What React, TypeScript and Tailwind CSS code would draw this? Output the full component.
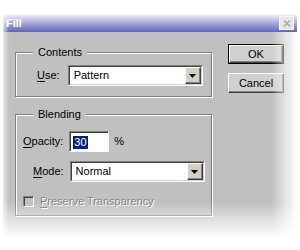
import type { ReactNode } from "react"

const font = { fontFamily: '"Liberation Sans", Arial, sans-serif' }

function Underlined({ first, rest }: { first: string; rest: string }) {
  return (
    <span>
      <span className="underline underline-offset-2">{first}</span>
      {rest}
    </span>
  )
}

function DropArrow() {
  return (
    <div className="h-full w-[16px] bg-[#d4d0c8] border-t border-l border-t-white border-l-white border-r border-b border-r-[#404040] border-b-[#404040] shadow-[inset_-1px_-1px_0_#808080] flex items-center justify-center">
      <svg width="7" height="4" viewBox="0 0 7 4">
        <path d="M0 0H7L3.5 4Z" fill="#000" />
      </svg>
    </div>
  )
}

function Select({ value }: { value: string }) {
  return (
    <div className="h-[21px] w-[135px] bg-white border-t border-l border-t-[#808080] border-l-[#808080] border-r border-b border-r-white border-b-white">
      <div className="h-full w-full border-t border-l border-t-[#404040] border-l-[#404040] border-r border-b border-r-[#d4d0c8] border-b-[#d4d0c8] flex items-stretch">
        <div className="flex-1 flex items-center pl-[4px] text-[11px] text-black">{value}</div>
        <DropArrow />
      </div>
    </div>
  )
}

function Group({ title, children, className }: { title: string; children: ReactNode; className: string }) {
  return (
    <fieldset className={`border border-[#808080] shadow-[1px_1px_0_#fff,inset_1px_1px_0_#fff] ${className}`}>
      <legend className="ml-[17px] px-[5px] bg-[#c0c0c0] text-[11px] text-black leading-[13px]">{title}</legend>
      {children}
    </fieldset>
  )
}

function Button({ label, isDefault, className }: { label: string; isDefault?: boolean; className?: string }) {
  return (
    <div className={`h-[20px] w-[56px] ${isDefault ? "border border-black" : ""} ${className ?? ""}`}>
      <div className="h-full w-full bg-[#d0d0d0] border border-t-white border-l-white border-r-[#404040] border-b-[#404040] shadow-[inset_-1px_-1px_0_#808080] flex items-center justify-center text-[11px] text-black">
        {label}
      </div>
    </div>
  )
}

export default function App() {
  return (
    <div className="w-[300px] h-[250px] bg-white overflow-hidden pt-[14px] pl-[3px]" style={font}>
      <div className="relative w-[294px] h-[224px] bg-[#c0c0c0]">
        <div className="h-[18px] bg-gradient-to-b from-[#f6f6fc] via-[#a8a8dc] to-[#6464b4] flex items-center justify-between pl-[3px] pr-[3px]">
          <span className="text-[11px] font-bold text-white">Fill</span>
          <div className="w-[15px] h-[14px] bg-[#e8e8ec] border border-[#f6f6f6] flex items-center justify-center">
            <svg width="8" height="7" viewBox="0 0 8 7">
              <path d="M1 0.5L7 6.5M7 0.5L1 6.5" stroke="#a8a8a8" strokeWidth="1.5" />
            </svg>
          </div>
        </div>

        <div className="flex pl-[12px] pt-[14px]">
          <div className="flex flex-col w-[197px]">
            <Group title="Contents" className="h-[51px]">
              <div className="flex items-center mt-[6px] pl-[21px] gap-[8px]">
                <span className="text-[11px] text-black"><Underlined first="U" rest="se:" /></span>
                <Select value="Pattern" />
              </div>
            </Group>

            <Group title="Blending" className="h-[108px] mt-[11px]">
              <div className="flex flex-col mt-[10px] pl-[7px]">
                <div className="flex items-center gap-[6px]">
                  <span className="text-[11px] text-black"><Underlined first="O" rest="pacity:" /></span>
                  <div className="h-[21px] w-[40px] bg-white border-t border-l border-t-[#808080] border-l-[#808080] border-r border-b border-r-white border-b-white">
                    <div className="h-full w-full border-t border-l border-t-[#404040] border-l-[#404040] flex items-center pl-[2px]">
                      <span className="bg-[#0a246a] text-white text-[11px] leading-[13px] px-[1px]">30</span>
                    </div>
                  </div>
                  <span className="text-[11px] text-black ml-[-1px]">%</span>
                </div>
                <div className="flex items-center gap-[6px] mt-[9px] pl-[10px]">
                  <span className="text-[11px] text-black"><Underlined first="M" rest="ode:" /></span>
                  <Select value="Normal" />
                </div>
                <div className="flex items-center gap-[6px] mt-[11px]">
                  <div className="w-[11px] h-[11px] border border-t-[#808080] border-l-[#808080] border-r-white border-b-white shadow-[inset_1px_1px_0_#404040]" />
                  <span className="text-[11px] text-[#868686] [text-shadow:1px_1px_0_#fff]"><Underlined first="P" rest="reserve Transparency" /></span>
                </div>
              </div>
            </Group>
          </div>

          <div className="flex flex-col ml-[16px] mt-[-2px]">
            <Button label="OK" isDefault />
            <Button label="Cancel" className="mt-[9px]" />
          </div>
        </div>

        <div className="pointer-events-none absolute left-0 top-0 bottom-0 w-[6px] bg-gradient-to-r from-white/70 to-transparent" />
        <div className="pointer-events-none absolute right-0 top-[18px] bottom-0 w-[26px] bg-gradient-to-r from-transparent to-white" />
        <div className="pointer-events-none absolute left-0 right-0 bottom-0 h-[36px] bg-gradient-to-b from-transparent to-white" />
      </div>
    </div>
  )
}
